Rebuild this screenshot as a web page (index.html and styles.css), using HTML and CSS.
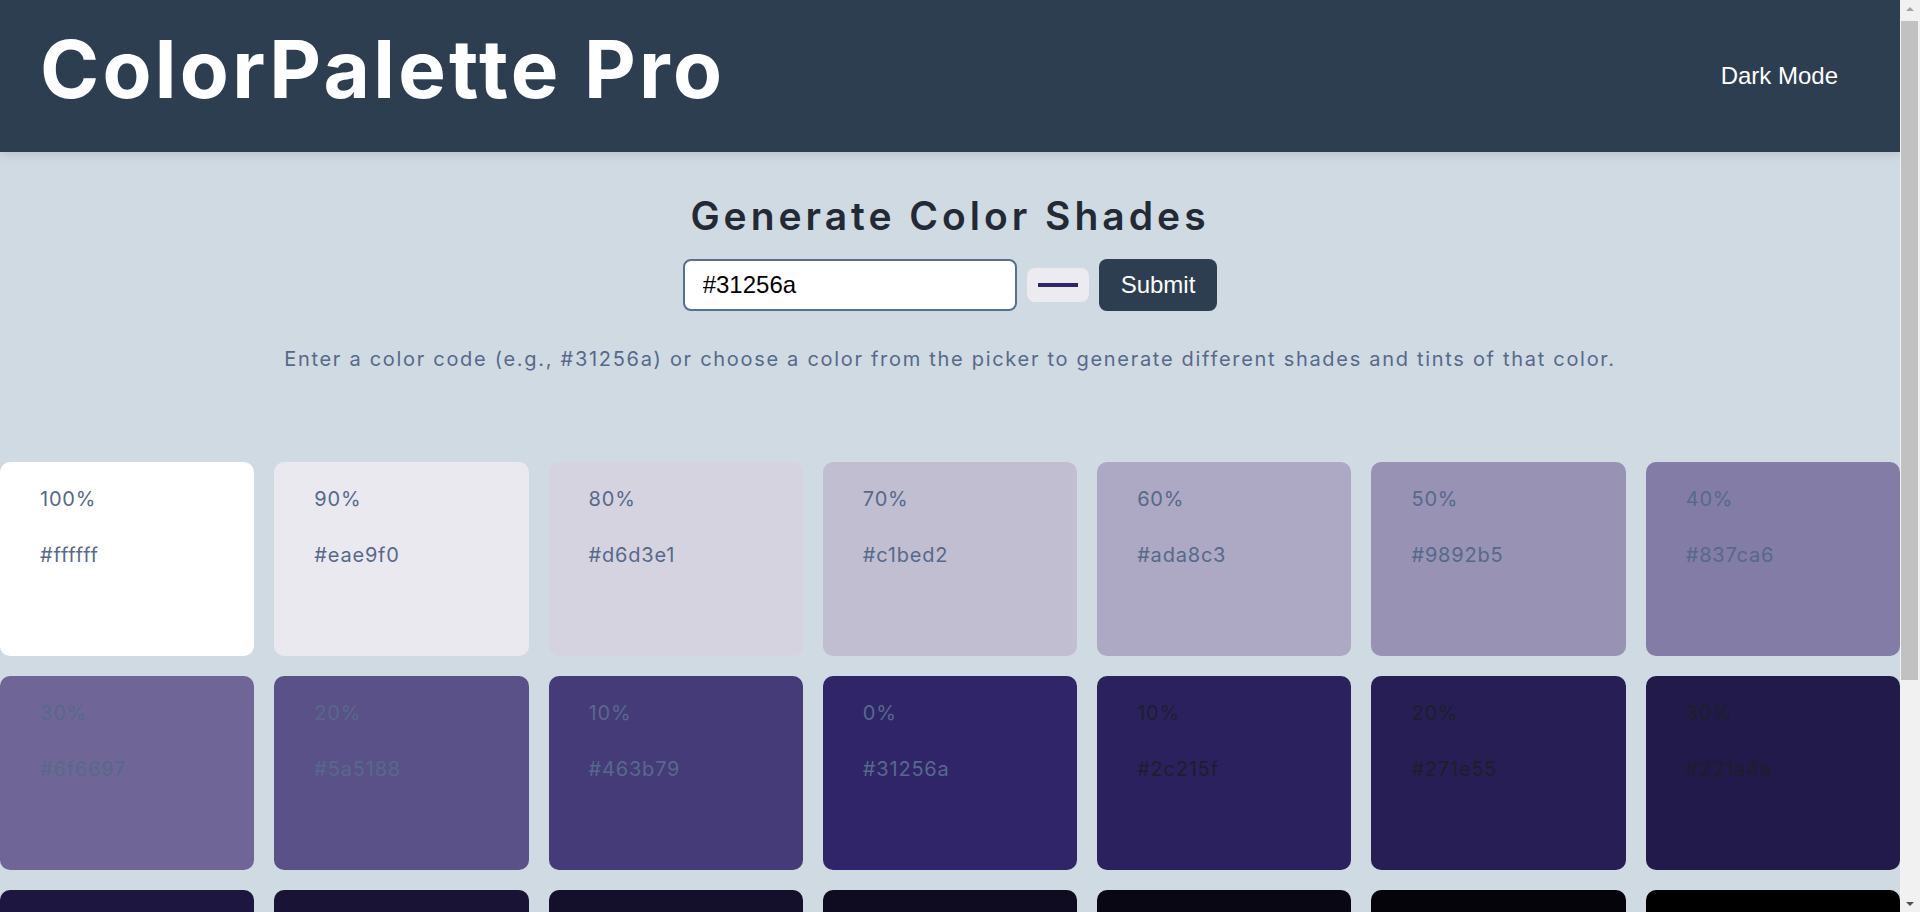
FILE: index.html
```html
<!DOCTYPE html>
<html lang="en">
<head>
<meta charset="utf-8">
<title>ColorPalette Pro</title>
<link rel="stylesheet" href="styles.css">
</head>
<body>
<header class="topbar">
  <h1 class="brand">ColorPalette Pro</h1>
  <button class="mode-toggle" type="button">Dark Mode</button>
</header>
<main class="content">
  <section class="generator">
    <h2 class="generator-title">Generate Color Shades</h2>
    <form class="generator-form">
      <input class="hex-input" type="text" value="#31256a">
      <input class="picker" type="color" value="#31256a">
      <button class="submit-btn" type="button">Submit</button>
    </form>
    <p class="hint">Enter a color code (e.g., #31256a) or choose a color from the picker to generate different shades and tints of that color.</p>
  </section>
  <section class="palette">
    <div class="swatch" style="background:#ffffff"><p class="swatch-pct">100%</p><p class="swatch-hex">#ffffff</p></div>
    <div class="swatch" style="background:#eae9f0"><p class="swatch-pct">90%</p><p class="swatch-hex">#eae9f0</p></div>
    <div class="swatch" style="background:#d6d3e1"><p class="swatch-pct">80%</p><p class="swatch-hex">#d6d3e1</p></div>
    <div class="swatch" style="background:#c1bed2"><p class="swatch-pct">70%</p><p class="swatch-hex">#c1bed2</p></div>
    <div class="swatch" style="background:#ada8c3"><p class="swatch-pct">60%</p><p class="swatch-hex">#ada8c3</p></div>
    <div class="swatch" style="background:#9892b5"><p class="swatch-pct">50%</p><p class="swatch-hex">#9892b5</p></div>
    <div class="swatch" style="background:#837ca6"><p class="swatch-pct">40%</p><p class="swatch-hex">#837ca6</p></div>
    <div class="swatch" style="background:#6f6697"><p class="swatch-pct">30%</p><p class="swatch-hex">#6f6697</p></div>
    <div class="swatch" style="background:#5a5188"><p class="swatch-pct">20%</p><p class="swatch-hex">#5a5188</p></div>
    <div class="swatch" style="background:#463b79"><p class="swatch-pct">10%</p><p class="swatch-hex">#463b79</p></div>
    <div class="swatch" style="background:#31256a"><p class="swatch-pct">0%</p><p class="swatch-hex">#31256a</p></div>
    <div class="swatch shade" style="background:#2c215f"><p class="swatch-pct">10%</p><p class="swatch-hex">#2c215f</p></div>
    <div class="swatch shade" style="background:#271e55"><p class="swatch-pct">20%</p><p class="swatch-hex">#271e55</p></div>
    <div class="swatch shade" style="background:#221a4a"><p class="swatch-pct">30%</p><p class="swatch-hex">#221a4a</p></div>
    <div class="swatch shade" style="background:#1d1640"><p class="swatch-pct">40%</p><p class="swatch-hex">#1d1640</p></div>
    <div class="swatch shade" style="background:#191335"><p class="swatch-pct">50%</p><p class="swatch-hex">#191335</p></div>
    <div class="swatch shade" style="background:#140f2a"><p class="swatch-pct">60%</p><p class="swatch-hex">#140f2a</p></div>
    <div class="swatch shade" style="background:#0f0b20"><p class="swatch-pct">70%</p><p class="swatch-hex">#0f0b20</p></div>
    <div class="swatch shade" style="background:#0a0715"><p class="swatch-pct">80%</p><p class="swatch-hex">#0a0715</p></div>
    <div class="swatch shade" style="background:#05040b"><p class="swatch-pct">90%</p><p class="swatch-hex">#05040b</p></div>
    <div class="swatch shade" style="background:#000000"><p class="swatch-pct">100%</p><p class="swatch-hex">#000000</p></div>
  </section>
</main>
<aside class="scrollbar" aria-hidden="true">
  <span class="scroll-arrow up"></span>
  <span class="scroll-thumb"></span>
  <span class="scroll-space"></span>
  <span class="scroll-arrow down"></span>
</aside>
</body>
</html>
```

FILE: styles.css
```css
* {
  box-sizing: border-box;
}

html, body {
  margin: 0;
  padding: 0;
}

body {
  background: #d0dae3;
  font-family: "Inter", "Noto Sans", sans-serif;
  color: #56698a;
  margin-right: 20px;
  padding-bottom: 130px;
}

.topbar {
  height: 152px;
  background: #2c3e50;
  display: flex;
  align-items: center;
  justify-content: space-between;
  padding: 0 40px;
  box-shadow: 0 2px 10px rgba(0, 0, 0, 0.12);
}

.brand {
  margin: 0 0 14px;
  font-size: 80px;
  line-height: 96px;
  font-weight: 700;
  color: #ffffff;
  letter-spacing: 3.3px;
}

.mode-toggle {
  background: transparent;
  border: none;
  color: #ffffff;
  font-family: "Liberation Sans", Arial, sans-serif;
  font-size: 24px;
  padding: 10px 22px;
  cursor: pointer;
}

.generator {
  display: flex;
  flex-direction: column;
  align-items: center;
  padding-top: 41px;
}

.generator-title {
  margin: 0 0 20px;
  font-size: 39px;
  line-height: 46px;
  font-weight: 600;
  letter-spacing: 4px;
  color: #232a35;
}

.generator-form {
  display: flex;
  align-items: center;
  gap: 10px;
  margin: 0;
}

.hex-input {
  width: 334px;
  height: 52px;
  border: 2px solid #56708f;
  border-radius: 8px;
  padding: 0 18px;
  font-family: "Liberation Sans", Arial, sans-serif;
  font-size: 24px;
  color: #000000;
  background: #ffffff;
  outline: none;
}

.picker {
  -webkit-appearance: none;
  appearance: none;
  width: 62px;
  height: 34px;
  padding: 0;
  border: none;
  border-radius: 8px;
  background: #ecebef;
  cursor: pointer;
}

.picker::-webkit-color-swatch-wrapper {
  padding: 15px 11px;
}

.picker::-webkit-color-swatch {
  border: none;
  border-radius: 0;
}

.submit-btn {
  height: 52px;
  padding: 0 22px;
  border: none;
  border-radius: 8px;
  background: #2c3e50;
  color: #ffffff;
  font-family: "Liberation Sans", Arial, sans-serif;
  font-size: 24px;
  cursor: pointer;
}

.hint {
  margin: 33px 0 0;
  font-size: 20px;
  line-height: 30px;
  letter-spacing: 1.7px;
  color: #56698a;
}

.palette {
  display: grid;
  grid-template-columns: repeat(7, 1fr);
  gap: 20px;
  margin-top: 88px;
}

.swatch {
  height: 194px;
  border-radius: 10px;
  padding: 22px 40px;
  display: flex;
  flex-direction: column;
  gap: 26px;
  color: #56698a;
}

.swatch.shade {
  color: #1c1f2b;
}

.swatch-pct,
.swatch-hex {
  margin: 0;
  font-size: 20px;
  line-height: 30px;
  letter-spacing: 0.8px;
}

/* imitation of the browser's classic scrollbar seen in the capture */
.scrollbar {
  position: fixed;
  top: 0;
  right: 0;
  bottom: 0;
  width: 20px;
  background: #f1f1f1;
  display: flex;
  flex-direction: column;
  align-items: center;
}

.scroll-arrow {
  height: 17px;
  width: 100%;
  display: flex;
  align-items: center;
  justify-content: center;
}

.scroll-arrow::before {
  content: "";
  border-left: 4px solid transparent;
  border-right: 4px solid transparent;
}

.scroll-arrow.up::before {
  border-bottom: 4px solid #a3a3a3;
}

.scroll-arrow.down::before {
  border-top: 4px solid #505050;
}

.scroll-thumb {
  width: 17px;
  height: 659px;
  margin: 4px 1px 0 0;
  background: #c1c1c1;
}

.scroll-space {
  flex: 1;
}
```
